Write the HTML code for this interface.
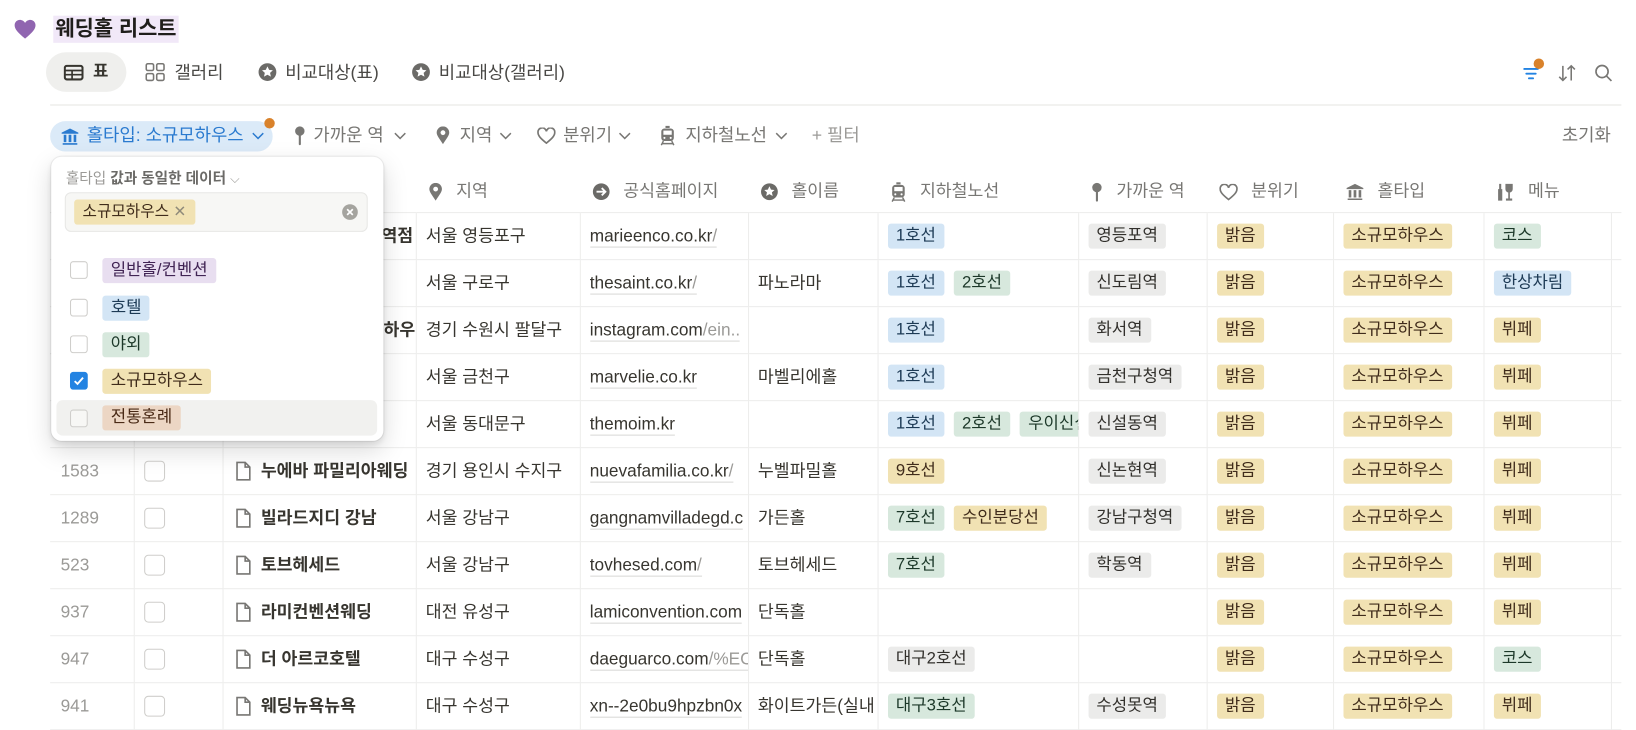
<!DOCTYPE html>
<html><head><meta charset="utf-8">
<style>
*{box-sizing:border-box;margin:0;padding:0}
html,body{width:1636px;height:729px;overflow:hidden;background:#fff}
body{font-family:"Liberation Sans","Noto Sans CJK KR",sans-serif;color:#37352f}
#w{position:absolute;left:0;top:0;width:1566px;height:698px;transform:scale(1.0447);transform-origin:0 0}
.a{position:absolute;white-space:nowrap}
.g{color:#787774}
svg{display:inline-block;vertical-align:middle}
.tag{display:inline-block;height:24px;line-height:24px;padding:0 8px;border-radius:3px;font-size:16px;margin-right:9px;vertical-align:middle}
.bl{background:#d3e5f5;color:#1d3a55}.gr{background:#d7e8dd;color:#1c3829}.ye{background:#f1e2b3;color:#402c1b}
.gy{background:#ebebea;color:#32302c}.pu{background:#e8def0;color:#412454}.br{background:#ecd6c4;color:#4a2a16}
table{position:absolute;left:48px;top:160px;width:1504px;border-collapse:collapse;table-layout:fixed;font-size:16.5px}
td{height:45px;line-height:24px;border-bottom:1px solid #ededec;border-right:1px solid #ededec;padding:0 9px;white-space:nowrap;overflow:hidden;vertical-align:middle}
td:last-child{border-right:none}
th{height:43px;border-bottom:1px solid #ededec;font-weight:normal;color:#787774;text-align:left;padding:0 9px 0 12px;white-space:nowrap;overflow:hidden;font-size:16.5px}
th svg{margin-right:8px}
.num{color:#9b9a97;padding-left:10px}
.cb{display:inline-block;width:20px;height:20px;border:1.5px solid #cfcecb;border-radius:4px;vertical-align:middle}
.nm{font-weight:bold;padding-left:11px}
.u{border-bottom:1px solid #d9d9d7;padding-bottom:1px}
.u i{font-style:normal;color:#9b9a97}
.f{font-size:17px;line-height:22px}
</style></head><body><div id="w">

<svg class="a" style="left:13px;top:18px" width="22" height="20" viewBox="0 0 22 20"><path d="M11 19 C4 13 1 10 1 6 C1 3 3.5 1 6 1 C8 1 10 2 11 4 C12 2 14 1 16 1 C18.5 1 21 3 21 6 C21 10 18 13 11 19Z" fill="#9065b0"/></svg>
<div class="a" style="left:51px;top:15px;height:26px;line-height:26px;padding:0 2px;background:#f1e8f8;font-size:20px;font-weight:bold;color:#1f1e1b">웨딩홀 리스트</div>

<div class="a" style="left:44px;top:50px;width:77px;height:38px;border-radius:19px;background:#efefed"></div>
<svg class="a" style="left:61px;top:62px" width="19" height="15" viewBox="0 0 19 15"><rect x="1" y="1" width="17" height="13" rx="2" fill="none" stroke="#37352f" stroke-width="2"/><path d="M1 5.5H18M1 9.5H18M8 5.5V14" stroke="#37352f" stroke-width="1.6"/></svg>
<div class="a" style="left:89px;top:58px;font-size:16px;font-weight:bold;line-height:22px">표</div>
<svg class="a" style="left:139px;top:60px" width="20" height="18" viewBox="0 0 20 18"><rect x="1" y="1" width="7" height="6.5" rx="1.5" fill="none" stroke="#787774" stroke-width="1.5"/><rect x="11" y="1" width="7" height="6.5" rx="1.5" fill="none" stroke="#787774" stroke-width="1.5"/><rect x="1" y="10.5" width="7" height="6.5" rx="1.5" fill="none" stroke="#787774" stroke-width="1.5"/><rect x="11" y="10.5" width="7" height="6.5" rx="1.5" fill="none" stroke="#787774" stroke-width="1.5"/></svg>
<div class="a" style="left:167px;top:58px;font-size:17px;line-height:24px;color:#4a4946">갤러리</div>
<svg class="a" style="left:247px;top:60px" width="18" height="18" viewBox="0 0 18 18"><circle cx="9" cy="9" r="8.5" fill="#6b6a67"/><path d="M9 3.5l1.6 3.4 3.6.4-2.7 2.4.8 3.6L9 11.5 5.7 13.3l.8-3.6L3.8 7.3l3.6-.4z" fill="#fff"/></svg>
<div class="a" style="left:273px;top:58px;font-size:17px;line-height:24px;color:#4a4946">비교대상(표)</div>
<svg class="a" style="left:394px;top:60px" width="18" height="18" viewBox="0 0 18 18"><circle cx="9" cy="9" r="8.5" fill="#6b6a67"/><path d="M9 3.5l1.6 3.4 3.6.4-2.7 2.4.8 3.6L9 11.5 5.7 13.3l.8-3.6L3.8 7.3l3.6-.4z" fill="#fff"/></svg>
<div class="a" style="left:420px;top:58px;font-size:17px;line-height:24px;color:#4a4946">비교대상(갤러리)</div>

<svg class="a" style="left:1457px;top:62px" width="18" height="16" viewBox="0 0 18 16"><path d="M2 4H15M4 8.5H13M6.5 13H10.5" stroke="#2383e2" stroke-width="1.8" stroke-linecap="round"/></svg>
<div class="a" style="left:1468px;top:56px;width:10px;height:10px;border-radius:5px;background:#d9822b"></div>
<svg class="a" style="left:1491px;top:61px" width="18" height="18" viewBox="0 0 18 18"><path d="M5 2V16M1.5 12.5L5 16 8.5 12.5M13 16V2M9.5 5.5L13 2 16.5 5.5" stroke="#787774" stroke-width="1.5" fill="none"/></svg>
<svg class="a" style="left:1526px;top:61px" width="18" height="18" viewBox="0 0 18 18"><circle cx="7.5" cy="7.5" r="5.8" fill="none" stroke="#787774" stroke-width="1.6"/><path d="M11.8 11.8L16.5 16.5" stroke="#787774" stroke-width="1.6"/></svg>
<div class="a" style="left:48px;top:100px;width:1504px;height:1px;background:#e5e5e3"></div>

<div class="a" style="left:48px;top:116px;width:213px;height:29px;border-radius:15px;background:#dbeaf8"></div>
<svg class="a" style="left:58px;top:122px" width="18" height="17" viewBox="0 0 18 17"><path d="M1 5L9 1 17 5V6H1Z M2 15H16V16.5H2Z M3 7H5.5V14H3Z M7.7 7H10.3V14H7.7Z M12.5 7H15V14H12.5Z" fill="#2a7acf"/></svg>
<div class="a f" style="left:83px;top:119px;color:#2a7acf">홀타입: 소규모하우스</div>
<svg class="a" style="left:241px;top:126px" width="12" height="8" viewBox="0 0 12 8"><path d="M1 1.5L6 6.5 11 1.5" stroke="#2a7acf" stroke-width="1.4" fill="none"/></svg>
<div class="a" style="left:253px;top:113px;width:10px;height:10px;border-radius:5px;background:#d9822b"></div>

<svg class="a" style="left:281px;top:120px" width="12" height="20" viewBox="0 0 12 20"><circle cx="6" cy="5.5" r="4.5" fill="#787774"/><rect x="5" y="8" width="2" height="11" rx="1" fill="#787774"/></svg>
<div class="a g f" style="left:300px;top:119px">가까운 역</div>
<svg class="a" style="left:377px;top:126px" width="12" height="8" viewBox="0 0 12 8"><path d="M1 1.5L6 6.5 11 1.5" stroke="#787774" stroke-width="1.4" fill="none"/></svg>
<svg class="a" style="left:417px;top:121px" width="14" height="18" viewBox="0 0 14 18"><path d="M7 17C3 11 1 8.5 1 6a6 6 0 0 1 12 0c0 2.5-2 5-6 11Z" fill="#787774"/><circle cx="7" cy="6" r="2.3" fill="#fff"/></svg>
<div class="a g f" style="left:440px;top:119px">지역</div>
<svg class="a" style="left:478px;top:126px" width="12" height="8" viewBox="0 0 12 8"><path d="M1 1.5L6 6.5 11 1.5" stroke="#787774" stroke-width="1.4" fill="none"/></svg>
<svg class="a" style="left:514px;top:122px" width="18" height="16" viewBox="0 0 18 16"><path d="M9 15C3.5 10.5 1 8 1 5a4 4 0 0 1 8-1.2A4 4 0 0 1 17 5c0 3-2.5 5.5-8 10Z" fill="none" stroke="#787774" stroke-width="1.6"/></svg>
<div class="a g f" style="left:539px;top:119px">분위기</div>
<svg class="a" style="left:592px;top:126px" width="12" height="8" viewBox="0 0 12 8"><path d="M1 1.5L6 6.5 11 1.5" stroke="#787774" stroke-width="1.4" fill="none"/></svg>
<svg class="a" style="left:631px;top:120px" width="16" height="20" viewBox="0 0 16 20"><rect x="6" y="0.5" width="4" height="2" fill="#787774"/><rect x="2" y="3" width="12" height="12" rx="3" fill="#787774"/><rect x="4" y="5" width="8" height="4" fill="#fff"/><circle cx="5" cy="12" r="1" fill="#fff"/><circle cx="11" cy="12" r="1" fill="#fff"/><path d="M4 15L2 19M12 15L14 19M3 17.5H13" stroke="#787774" stroke-width="1.4"/></svg>
<div class="a g f" style="left:656px;top:119px">지하철노선</div>
<svg class="a" style="left:742px;top:126px" width="12" height="8" viewBox="0 0 12 8"><path d="M1 1.5L6 6.5 11 1.5" stroke="#787774" stroke-width="1.4" fill="none"/></svg>
<div class="a f" style="left:777px;top:119px;color:#9b9a97">+ 필터</div>
<div class="a g f" style="left:1495px;top:119px">초기화</div>

<table>
<colgroup><col style="width:80px"><col style="width:85px"><col style="width:185px"><col style="width:157px"><col style="width:161px"><col style="width:124px"><col style="width:192px"><col style="width:123px"><col style="width:121px"><col style="width:144px"><col style="width:122px"><col style="width:10px"></colgroup>
<tr><th></th><th></th><th></th>
<th><svg width="14" height="18" viewBox="0 0 14 18"><path d="M7 17C3 11 1 8.5 1 6a6 6 0 0 1 12 0c0 2.5-2 5-6 11Z" fill="#787774"/><circle cx="7" cy="6" r="2.3" fill="#fff"/></svg>&nbsp;지역</th>
<th><svg width="17" height="17" viewBox="0 0 17 17"><circle cx="8.5" cy="8.5" r="8" fill="#6b6a67"/><path d="M4 8.5H12M9 5L12.5 8.5 9 12" stroke="#fff" stroke-width="1.8" fill="none"/></svg>&nbsp;공식홈페이지</th>
<th><svg width="17" height="17" viewBox="0 0 18 18"><circle cx="9" cy="9" r="8.5" fill="#6b6a67"/><path d="M9 3.5l1.6 3.4 3.6.4-2.7 2.4.8 3.6L9 11.5 5.7 13.3l.8-3.6L3.8 7.3l3.6-.4z" fill="#fff"/></svg>&nbsp;홀이름</th>
<th><svg width="16" height="20" viewBox="0 0 16 20"><rect x="6" y="0.5" width="4" height="2" fill="#787774"/><rect x="2" y="3" width="12" height="12" rx="3" fill="#787774"/><rect x="4" y="5" width="8" height="4" fill="#fff"/><circle cx="5" cy="12" r="1" fill="#fff"/><circle cx="11" cy="12" r="1" fill="#fff"/><path d="M4 15L2 19M12 15L14 19M3 17.5H13" stroke="#787774" stroke-width="1.4"/></svg>&nbsp;지하철노선</th>
<th><svg width="12" height="20" viewBox="0 0 12 20"><circle cx="6" cy="5.5" r="4.5" fill="#787774"/><rect x="5" y="8" width="2" height="11" rx="1" fill="#787774"/></svg>&nbsp;가까운 역</th>
<th><svg width="18" height="16" viewBox="0 0 18 16"><path d="M9 15C3.5 10.5 1 8 1 5a4 4 0 0 1 8-1.2A4 4 0 0 1 17 5c0 3-2.5 5.5-8 10Z" fill="none" stroke="#787774" stroke-width="1.6"/></svg>&nbsp;분위기</th>
<th><svg width="18" height="17" viewBox="0 0 18 17"><path d="M1 5L9 1 17 5V6H1Z M2 15H16V16.5H2Z M3 7H5.5V14H3Z M7.7 7H10.3V14H7.7Z M12.5 7H15V14H12.5Z" fill="#787774"/></svg>&nbsp;홀타입</th>
<th><svg width="18" height="18" viewBox="0 0 18 18"><path d="M2 6H6V17H2Z M3 1H5V6H3Z" fill="#787774"/><path d="M9 1H16V6a3.5 3.5 0 0 1-7 0Z M11.7 9H13.3V15H11.7Z M9.5 15H15.5V17H9.5Z" fill="#787774"/></svg>&nbsp;메뉴</th><th></th></tr>

<tr><td class="num"></td><td></td><td class="nm" style="text-align:right;padding-right:2px">아펠가모 영등포역점</td><td>서울 영등포구</td><td><span class="u">marieenco.co.kr<i>/</i></span></td><td></td><td><span class="tag bl">1호선</span></td><td><span class="tag gy">영등포역</span></td><td><span class="tag ye">밝음</span></td><td><span class="tag ye">소규모하우스</span></td><td><span class="tag gr">코스</span></td><td></td></tr>
<tr><td></td><td></td><td></td><td>서울 구로구</td><td><span class="u">thesaint.co.kr<i>/</i></span></td><td>파노라마</td><td><span class="tag bl">1호선</span><span class="tag gr">2호선</span></td><td><span class="tag gy">신도림역</span></td><td><span class="tag ye">밝음</span></td><td><span class="tag ye">소규모하우스</span></td><td><span class="tag bl">한상차림</span></td><td></td></tr>
<tr><td></td><td></td><td class="nm" style="text-align:right;padding-right:0">아인스파티하우</td><td>경기 수원시 팔달구</td><td><span class="u">instagram.com<i>/ein..</i></span></td><td></td><td><span class="tag bl">1호선</span></td><td><span class="tag gy">화서역</span></td><td><span class="tag ye">밝음</span></td><td><span class="tag ye">소규모하우스</span></td><td><span class="tag ye">뷔페</span></td><td></td></tr>
<tr><td></td><td></td><td></td><td>서울 금천구</td><td><span class="u">marvelie.co.kr</span></td><td>마벨리에홀</td><td><span class="tag bl">1호선</span></td><td><span class="tag gy">금천구청역</span></td><td><span class="tag ye">밝음</span></td><td><span class="tag ye">소규모하우스</span></td><td><span class="tag ye">뷔페</span></td><td></td></tr>
<tr><td></td><td></td><td></td><td>서울 동대문구</td><td><span class="u">themoim.kr</span></td><td></td><td><span class="tag bl">1호선</span><span class="tag gr">2호선</span><span class="tag gr">우이신설</span></td><td><span class="tag gy">신설동역</span></td><td><span class="tag ye">밝음</span></td><td><span class="tag ye">소규모하우스</span></td><td><span class="tag ye">뷔페</span></td><td></td></tr>
<tr><td class="num">1583</td><td><span class="cb"></span></td><td class="nm"><svg width="16" height="20" viewBox="0 0 14 18"><path d="M1.5 1.5H8.5L12.5 5.5V16.5H1.5Z M8.5 1.5V5.5H12.5" fill="none" stroke="#787774" stroke-width="1.4"/></svg>&nbsp; 누에바 파밀리아웨딩</td><td>경기 용인시 수지구</td><td><span class="u">nuevafamilia.co.kr<i>/</i></span></td><td>누벨파밀홀</td><td><span class="tag ye">9호선</span></td><td><span class="tag gy">신논현역</span></td><td><span class="tag ye">밝음</span></td><td><span class="tag ye">소규모하우스</span></td><td><span class="tag ye">뷔페</span></td><td></td></tr>
<tr><td class="num">1289</td><td><span class="cb"></span></td><td class="nm"><svg width="16" height="20" viewBox="0 0 14 18"><path d="M1.5 1.5H8.5L12.5 5.5V16.5H1.5Z M8.5 1.5V5.5H12.5" fill="none" stroke="#787774" stroke-width="1.4"/></svg>&nbsp; 빌라드지디 강남</td><td>서울 강남구</td><td><span class="u">gangnamvilladegd.c</span></td><td>가든홀</td><td><span class="tag gr">7호선</span><span class="tag ye">수인분당선</span></td><td><span class="tag gy">강남구청역</span></td><td><span class="tag ye">밝음</span></td><td><span class="tag ye">소규모하우스</span></td><td><span class="tag ye">뷔페</span></td><td></td></tr>
<tr><td class="num">523</td><td><span class="cb"></span></td><td class="nm"><svg width="16" height="20" viewBox="0 0 14 18"><path d="M1.5 1.5H8.5L12.5 5.5V16.5H1.5Z M8.5 1.5V5.5H12.5" fill="none" stroke="#787774" stroke-width="1.4"/></svg>&nbsp; 토브헤세드</td><td>서울 강남구</td><td><span class="u">tovhesed.com<i>/</i></span></td><td>토브헤세드</td><td><span class="tag gr">7호선</span></td><td><span class="tag gy">학동역</span></td><td><span class="tag ye">밝음</span></td><td><span class="tag ye">소규모하우스</span></td><td><span class="tag ye">뷔페</span></td><td></td></tr>
<tr><td class="num">937</td><td><span class="cb"></span></td><td class="nm"><svg width="16" height="20" viewBox="0 0 14 18"><path d="M1.5 1.5H8.5L12.5 5.5V16.5H1.5Z M8.5 1.5V5.5H12.5" fill="none" stroke="#787774" stroke-width="1.4"/></svg>&nbsp; 라미컨벤션웨딩</td><td>대전 유성구</td><td><span class="u">lamiconvention.com</span></td><td>단독홀</td><td></td><td></td><td><span class="tag ye">밝음</span></td><td><span class="tag ye">소규모하우스</span></td><td><span class="tag ye">뷔페</span></td><td></td></tr>
<tr><td class="num">947</td><td><span class="cb"></span></td><td class="nm"><svg width="16" height="20" viewBox="0 0 14 18"><path d="M1.5 1.5H8.5L12.5 5.5V16.5H1.5Z M8.5 1.5V5.5H12.5" fill="none" stroke="#787774" stroke-width="1.4"/></svg>&nbsp; 더 아르코호텔</td><td>대구 수성구</td><td><span class="u">daeguarco.com<i>/%EC</i></span></td><td>단독홀</td><td><span class="tag gy">대구2호선</span></td><td></td><td><span class="tag ye">밝음</span></td><td><span class="tag ye">소규모하우스</span></td><td><span class="tag gr">코스</span></td><td></td></tr>
<tr><td class="num">941</td><td><span class="cb"></span></td><td class="nm"><svg width="16" height="20" viewBox="0 0 14 18"><path d="M1.5 1.5H8.5L12.5 5.5V16.5H1.5Z M8.5 1.5V5.5H12.5" fill="none" stroke="#787774" stroke-width="1.4"/></svg>&nbsp; 웨딩뉴욕뉴욕</td><td>대구 수성구</td><td><span class="u">xn--2e0bu9hpzbn0x</span></td><td>화이트가든(실내</td><td><span class="tag gr">대구3호선</span></td><td><span class="tag gy">수성못역</span></td><td><span class="tag ye">밝음</span></td><td><span class="tag ye">소규모하우스</span></td><td><span class="tag ye">뷔페</span></td><td></td></tr>
</table>

<div class="a" style="left:49px;top:150px;width:318px;height:272px;background:#fff;border-radius:10px;box-shadow:0 0 0 1px rgba(15,15,15,.06),0 3px 6px rgba(15,15,15,.1),0 9px 24px rgba(15,15,15,.15)">
 <div class="a" style="left:14px;top:10px;font-size:14px;line-height:20px;color:#9b9a97">홀타입 <b style="color:#6b6a67">값과 동일한 데이터</b> <span style="font-size:12px">⌵</span></div>
 <div class="a" style="left:13px;top:34px;width:290px;height:38px;border-radius:6px;background:#f7f7f5;border:1px solid #e7e7e5">
  <span class="tag ye" style="position:absolute;left:8px;top:6px;font-size:15px;height:24px">소규모하우스 <span style="color:#8f8a7a">✕</span></span>
  <svg class="a" style="left:264px;top:10px" width="16" height="16" viewBox="0 0 16 16"><circle cx="8" cy="8" r="7.5" fill="#a5a49f"/><path d="M5.3 5.3L10.7 10.7M10.7 5.3L5.3 10.7" stroke="#fff" stroke-width="1.6"/></svg>
 </div>
 <div class="a" style="left:5px;top:233px;width:307px;height:34px;border-radius:6px;background:#f1f1ef"></div>
 <div class="a" style="left:18px;top:100px;width:17px;height:17px;border:1px solid #cfcecb;border-radius:3px;background:#fff"></div>
 <span class="a tag pu" style="left:49px;top:97px">일반홀/컨벤션</span>
 <div class="a" style="left:18px;top:136px;width:17px;height:17px;border:1px solid #cfcecb;border-radius:3px;background:#fff"></div>
 <span class="a tag bl" style="left:49px;top:133px">호텔</span>
 <div class="a" style="left:18px;top:171px;width:17px;height:17px;border:1px solid #cfcecb;border-radius:3px;background:#fff"></div>
 <span class="a tag gr" style="left:49px;top:168px">야외</span>
 <div class="a" style="left:18px;top:206px;width:17px;height:17px;border-radius:3px;background:#2383e2"></div>
 <svg class="a" style="left:20px;top:208px" width="13" height="13" viewBox="0 0 13 13"><path d="M2.5 6.8L5.2 9.5 10.5 3.5" stroke="#fff" stroke-width="1.8" fill="none"/></svg>
 <span class="a tag ye" style="left:49px;top:203px">소규모하우스</span>
 <div class="a" style="left:18px;top:242px;width:17px;height:17px;border:1px solid #cfcecb;border-radius:3px;background:#f7f7f5"></div>
 <span class="a tag br" style="left:49px;top:238px">전통혼례</span>
</div>

</div></body></html>
